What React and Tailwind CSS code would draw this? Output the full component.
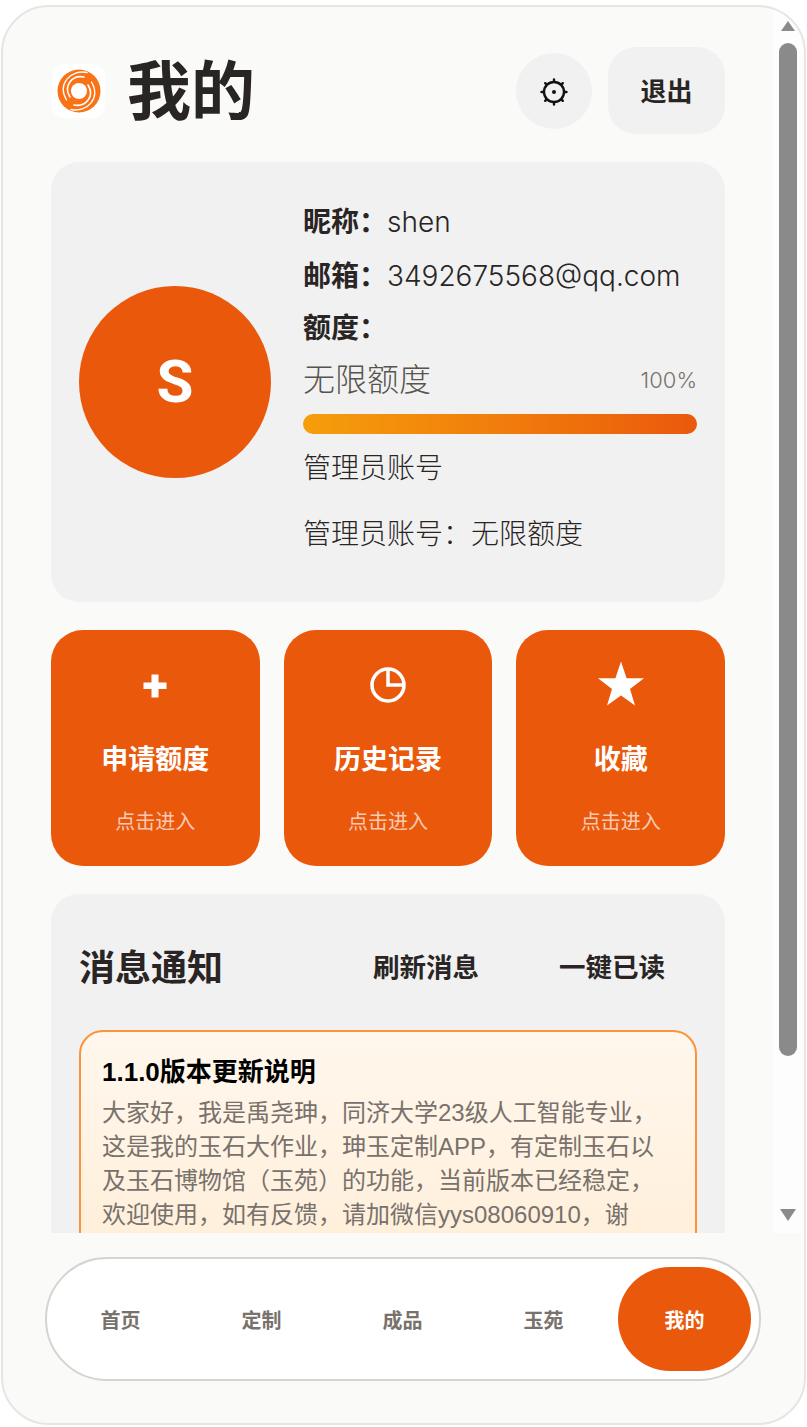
const CJK = "font-['Inter','Noto_Sans_CJK_SC',sans-serif]";

function Logo() {
  const arm = (
    <>
      <path d="M30 3.500C14 0 0 15 9.500 31" stroke="white" strokeWidth="1.300" strokeLinecap="round" />
      <path d="M27 8C15 5.500 6 17 13 28" stroke="white" strokeWidth="1.600" strokeLinecap="round" />
    </>
  );
  return (
    <div className="ml-[1px] flex h-[54px] w-[53px] shrink-0 items-center justify-center rounded-xl bg-white">
      <svg width="44" height="44" viewBox="0 0 44 44" fill="none">
        <circle cx="22" cy="22" r="21.500" fill="#f97316" />
        {arm}
        <g transform="rotate(180 22 22)">{arm}</g>
        <circle cx="22" cy="22" r="8" fill="white" />
      </svg>
    </div>
  );
}

function Gear() {
  return (
    <svg className="mt-[2px]" width="28" height="28" viewBox="0 0 28 28" fill="none" stroke="#111" strokeWidth="2.400" strokeLinecap="round">
      <circle cx="14" cy="14" r="10" />
      <circle cx="14" cy="14" r="2" fill="#111" stroke="none" />
      <path d="M14 1.500v1.500M14 25v1.500M1.500 14H3M25 14h1.500M5.200 5.200l1 1M21.800 21.800l1 1M5.200 22.800l1-1M21.800 6.200l1-1" />
    </svg>
  );
}

function ActionCard({ icon, title }) {
  return (
    <div className="flex h-[236px] flex-col items-center rounded-[32px] bg-[#ea580c] text-white">
      <div className="flex h-[112px] w-full items-center justify-center">{icon}</div>
      <div className="text-[27px] leading-[36px] font-bold">{title}</div>
      <div className="mt-[30px] text-[20px] leading-[28px] text-white/70">点击进入</div>
    </div>
  );
}

function Scrollbar() {
  return (
    <div className="flex w-[30px] shrink-0 flex-col items-center bg-[#fdfdfd]">
      <div className="mt-[14px] h-0 w-0 border-x-[7px] border-b-[10px] border-x-transparent border-b-[#8a8a8a]" />
      <div className="mt-[12px] h-[1013px] w-[18px] shrink-0 rounded-full bg-[#8a8a8a]" />
      <div className="mt-[153px] h-0 w-0 border-x-[8px] border-t-[12px] border-x-transparent border-t-[#8a8a8a]" />
    </div>
  );
}

export default function App() {
  const tabs = ["首页", "定制", "成品", "玉苑", "我的"];
  return (
    <div className={`h-[1427px] w-[807px] overflow-hidden bg-white pt-[5px] pl-[1px] text-[#292524] ${CJK}`}>
      <div className="flex h-[1420px] w-[805px] flex-col overflow-hidden rounded-[48px] border-2 border-[#e7e5e4] bg-[#fafaf9]">
        <div className="flex h-[1226px] shrink-0 overflow-hidden">
          <div className="w-[770px] shrink-0 px-[48px] pt-[40px]">
            <div className="flex h-[87px] items-center">
              <Logo />
              <h1 className="ml-[22px] text-[64px] leading-[87px] font-bold">我的</h1>
              <button className="ml-auto flex h-[76px] w-[76px] items-center justify-center rounded-full bg-[#f1f1f1]">
                <Gear />
              </button>
              <button className="ml-[16px] h-[87px] w-[117px] rounded-[28px] bg-[#f1f1f1] pt-[2px] text-[26px] font-bold">退出</button>
            </div>

            <div className="mt-[28px] flex h-[440px] items-center gap-[32px] rounded-[28px] bg-[#f1f1f1] px-[28px]">
              <div className="flex h-[192px] w-[192px] shrink-0 items-center justify-center rounded-full bg-[#ea580c] font-['Roboto',sans-serif] text-[60px] font-bold text-white">S</div>
              <div className="min-w-0 flex-1 pb-[8px] text-[28px] leading-[40px]">
                <div className="h-[54px]"><b>昵称：</b><span className="font-light">shen</span></div>
                <div className="h-[52px]"><b>邮箱：</b><span className="font-light">3492675568@qq.com</span></div>
                <div className="h-[50px]"><b>额度：</b></div>
                <div className="flex items-center justify-between">
                  <span className="text-[32px] leading-[44px] font-light text-[#57534e]">无限额度</span>
                  <span className="text-[22px] font-light text-[#78716c]">100%</span>
                </div>
                <div className="mt-[12px] h-[20px] rounded-full bg-gradient-to-r from-[#f59e0b] to-[#ea580c]" />
                <div className="mt-[14px] font-light">管理员账号</div>
                <div className="mt-[26px] font-light">管理员账号：无限额度</div>
              </div>
            </div>

            <div className="mt-[28px] grid grid-cols-3 gap-[24px]">
              <ActionCard
                title="申请额度"
                icon={
                  <svg width="26" height="26" viewBox="0 0 26 26" fill="white">
                    <path d="M9.500 1.500h7v8h8v6.500h-8v8.500h-7V16h-8V9.500h8z" />
                  </svg>
                }
              />
              <ActionCard
                title="历史记录"
                icon={
                  <svg className="mb-[2px]" width="36" height="36" viewBox="0 0 36 36" fill="none" stroke="white" strokeWidth="3.500">
                    <circle cx="18" cy="18" r="16" />
                    <path d="M18 3v15h15" />
                  </svg>
                }
              />
              <ActionCard
                title="收藏"
                icon={
                  <svg className="mb-[5px]" width="46" height="45" viewBox="0 0 46 44" fill="white">
                    <path d="M23 0l5.600 16.800H46L32 27.400 37 44 23 34 9 44l5-16.600L0 16.800h17.400z" />
                  </svg>
                }
              />
            </div>

            <div className="mt-[28px] rounded-[28px] bg-[#f1f1f1] p-[28px]">
              <div className="flex h-[92px] items-center">
                <h2 className="text-[36px] font-bold">消息通知</h2>
                <button className="ml-auto text-[26.500px] font-bold">刷新消息</button>
                <button className="mr-[32px] ml-[80px] text-[26.500px] font-bold">一键已读</button>
              </div>
              <div className="mt-[16px] rounded-[24px] border-2 border-[#fb923c] bg-gradient-to-b from-[#fff7ed] to-[#ffedd5] px-[21px] pt-[22px] pb-[40px] font-['Liberation_Sans','Noto_Sans_CJK_SC',sans-serif]">
                <div className="mb-[6px] text-[26px] leading-[36px] font-bold text-black">1.1.0版本更新说明</div>
                <p className="text-[24px] leading-[34px] text-[#78716c]">
                  大家好，我是禹尧珅，同济大学23级人工智能专业，这是我的玉石大作业，珅玉定制APP，有定制玉石以及玉石博物馆（玉苑）的功能，当前版本已经稳定，欢迎使用，如有反馈，请加微信yys08060910，谢谢！
                </p>
              </div>
            </div>
          </div>
          <Scrollbar />
        </div>

        <div className="mt-[24px] ml-[42px] flex h-[124px] w-[716px] items-center gap-[8px] rounded-full border-2 border-[#d6d3d1] bg-white pr-[8px] pl-[7px] font-['Liberation_Sans','Noto_Sans_CJK_SC',sans-serif]">
          {tabs.map((t, i) => (
            <div
              key={t}
              className={
                i === 4
                  ? "flex h-[104px] flex-1 items-center justify-center rounded-full bg-[#ea580c] pt-[3px] text-[20px] font-bold text-white"
                  : "flex h-[104px] flex-1 items-center justify-center pt-[3px] text-[20px] font-bold text-[#78716c]"
              }
            >
              {t}
            </div>
          ))}
        </div>
      </div>
    </div>
  );
}
